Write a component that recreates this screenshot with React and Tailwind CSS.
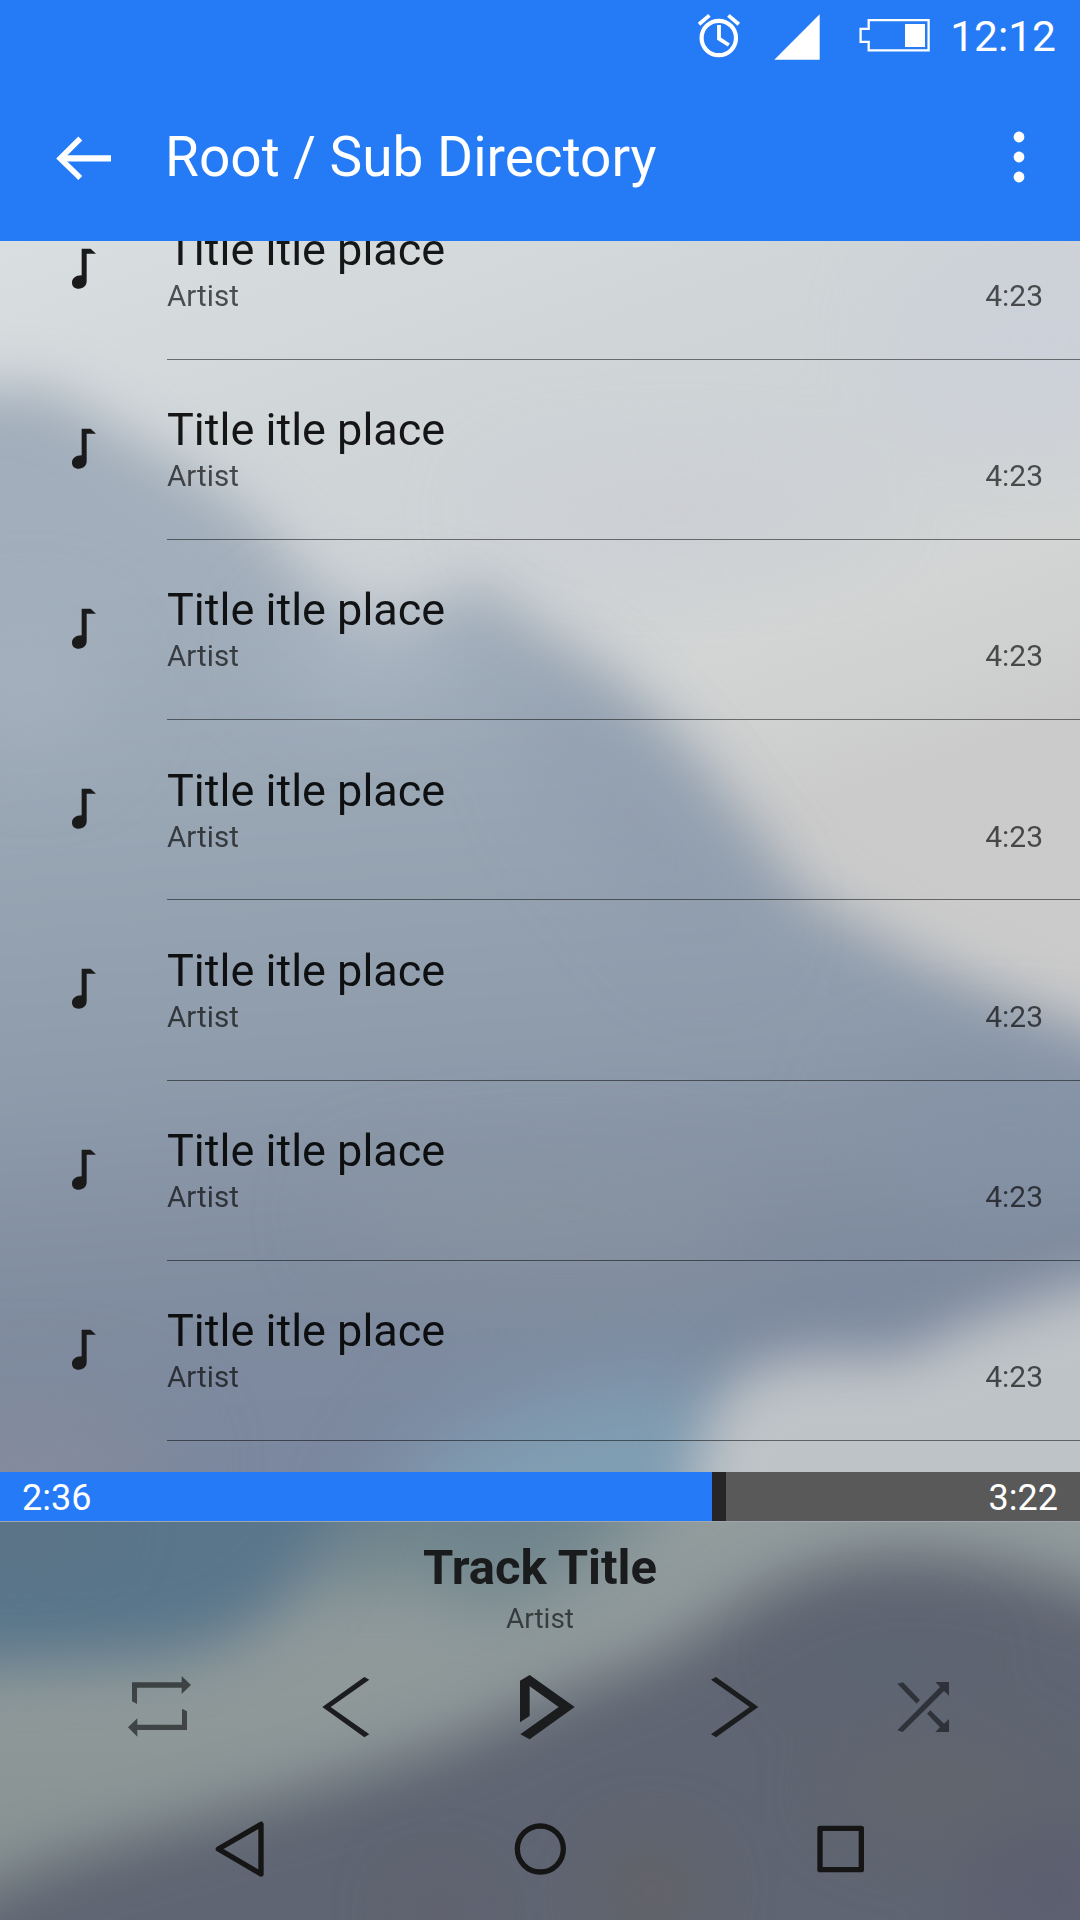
import React from "react";

const TRACKS = Array.from({ length: 7 }, (_, id) => ({
  id,
  title: "Title itle place",
  artist: "Artist",
  length: "4:23",
}));

function StatusBar() {
  return (
    <div className="flex h-[73px] items-start justify-end pr-[24px] text-white">
      <svg className="mt-[13px] h-[46px] w-[44px]" viewBox="697 13 44 46" fill="none" stroke="currentColor">
        <circle cx="718.8" cy="38" r="17.2" strokeWidth="4.2" />
        <path d="M699 24.2 L709.4 15.4 M728.4 15.4 L738.8 24.2" strokeWidth="3.8" />
        <path d="M719 25 V38.6 L728.8 45" strokeWidth="3.8" />
      </svg>
      <svg className="ml-[33px] mt-[14px] h-[46px] w-[46px]" viewBox="774 14 46 46" fill="currentColor">
        <path d="M774.3 59.7 H819.7 V14.3 Z" />
      </svg>
      <svg className="ml-[39px] mt-[18px] h-[34px] w-[71px]" viewBox="859 18 71 34">
        <path d="M868.7 20.1 H928.6 V50.3 H868.7 V41.9 H860.6 V28.9 H868.7 Z" fill="none" stroke="currentColor" strokeWidth="2.3" />
        <rect x="905" y="24" width="20" height="23" fill="currentColor" />
      </svg>
      <span className="ml-[20px] text-[42.5px] leading-[73px]">12:12</span>
    </div>
  );
}

function Toolbar() {
  return (
    <div className="flex h-[168px] items-center text-white">
      <svg className="ml-[55px] mt-[2px] h-[44px] w-[57px]" viewBox="55 136 57 44" fill="none" stroke="currentColor">
        <path d="M80.3 138.6 L60.2 158.4 L80.3 178" strokeWidth="5.6" />
        <path d="M60 158.4 H111" strokeWidth="6.4" />
      </svg>
      <h1 className="ml-[53px] grow text-[55px] leading-[168px]">Root / Sub Directory</h1>
      <svg className="mr-[55px] h-[52px] w-[12px]" viewBox="0 0 12 52" fill="currentColor">
        <circle cx="6" cy="6" r="5.4" />
        <circle cx="6" cy="26" r="5.4" />
        <circle cx="6" cy="46" r="5.4" />
      </svg>
    </div>
  );
}

function MountainBackdrop() {
  return (
    <svg className="absolute inset-0 -z-10 h-full w-full" viewBox="0 241 1080 1231" preserveAspectRatio="none">
      <defs>
        <linearGradient id="sky" x1="0" y1="241" x2="260" y2="1000" gradientUnits="userSpaceOnUse">
          <stop offset="0" stopColor="#d9dee0" />
          <stop offset="0.35" stopColor="#d0d5d8" />
          <stop offset="0.6" stopColor="#cfd3d6" />
          <stop offset="0.78" stopColor="#d3d5d5" />
          <stop offset="1" stopColor="#cbcbcb" />
        </linearGradient>
        <linearGradient id="rock" x1="0" y1="380" x2="80" y2="1472" gradientUnits="userSpaceOnUse">
          <stop offset="0" stopColor="#a1adba" />
          <stop offset="0.2" stopColor="#a2aebb" />
          <stop offset="0.42" stopColor="#98a5b3" />
          <stop offset="0.65" stopColor="#8e9bab" />
          <stop offset="0.85" stopColor="#808c9f" />
          <stop offset="1" stopColor="#7b889f" />
        </linearGradient>
        <filter id="b1" x="-30%" y="-40%" width="160%" height="180%" colorInterpolationFilters="sRGB">
          <feGaussianBlur stdDeviation="27" />
        </filter>
        <filter id="b2" x="-150%" y="-150%" width="400%" height="400%" colorInterpolationFilters="sRGB">
          <feGaussianBlur stdDeviation="45" />
        </filter>
      </defs>
      <rect x="0" y="241" width="1080" height="1231" fill="url(#sky)" />
      <g filter="url(#b2)">
        <ellipse cx="1040" cy="340" rx="140" ry="90" fill="#c9cedb" opacity="0.5" />
        <ellipse cx="680" cy="510" rx="190" ry="35" fill="#c8cad0" opacity="0.6" />
      </g>
      <path
        filter="url(#b1)"
        fill="url(#rock)"
        d="M-120 390 H50 L130 438 L215 488 L267 530 L300 572 L340 610 L390 628 L440 602 L485 584 L533 622 L633 690 L690 748 L745 820 L805 895 L930 965 L1080 1030 L1240 1100 V1700 H-120 Z"
      />
      <g filter="url(#b2)">
        <ellipse cx="370" cy="655" rx="90" ry="35" fill="#b2bdca" opacity="0.75" />
        <ellipse cx="30" cy="690" rx="70" ry="60" fill="#a8b3c0" opacity="0.7" />
        <path d="M520 650 L640 760 L760 920 L700 960 L560 800 Z" fill="#8c9aab" opacity="0.6" />
        <ellipse cx="1010" cy="1130" rx="150" ry="70" fill="#8491a6" opacity="0.7" />
        <ellipse cx="560" cy="1215" rx="220" ry="45" fill="#8a959f" opacity="0.7" />
        <ellipse cx="860" cy="1300" rx="140" ry="35" fill="#7d899f" opacity="0.8" />
        <ellipse cx="30" cy="1470" rx="140" ry="70" fill="#888c9b" opacity="0.7" />
        <path d="M380 1520 L440 1440 L560 1390 L700 1370 L760 1450 L760 1600 H380 Z" fill="#809eb3" />
      </g>
      <path
        filter="url(#b1)"
        fill="#bec3c7"
        d="M1300 1250 L1080 1286 L985 1317 L899 1356 L812 1354 L750 1367 L712 1407 L696 1453 L674 1640 H1300 Z"
      />
    </svg>
  );
}

function NoteIcon() {
  return (
    <svg className="ml-[72px] mt-[68px] h-[41px] w-[24px] shrink-0" viewBox="0 0 72 123" fill="#1a1a1a">
      <path d="M29 82 V2 H56 L72 17 H44 V100 C44 113 34 122 20 122 C8 122 0 115 0 104 C0 92 10 82 29 82 Z" />
    </svg>
  );
}

function TrackRow({ track }) {
  return (
    <li className="flex h-[180.15px]">
      <NoteIcon />
      <div className="ml-[71px] flex grow border-b border-black/50 pt-[44.3px]">
        <div className="grow">
          <div className="text-[45px] leading-[52px] text-black/90">{track.title}</div>
          <div className="text-[29.6px] leading-[40px] text-black/65">{track.artist}</div>
        </div>
        <div className="mr-[37px] mt-[52px] text-[30px] leading-[40px] text-black/65">{track.length}</div>
      </div>
    </li>
  );
}

function SeekBar() {
  return (
    <div className="flex h-[50px] border-b border-[#9fa6ad] bg-[#595959] text-[36px] leading-[52px] text-white">
      <div className="w-[712px] bg-[#257bf7] pl-[22px]">2:36</div>
      <div className="w-[14px] bg-[#262626]" />
      <div className="grow pr-[22px] text-right">3:22</div>
    </div>
  );
}

function PlayerBackdrop() {
  return (
    <svg className="absolute inset-0 -z-10 h-full w-full" viewBox="0 1522 1080 398" preserveAspectRatio="none">
      <defs>
        <linearGradient id="haze" x1="0" y1="1522" x2="0" y2="1920" gradientUnits="userSpaceOnUse">
          <stop offset="0" stopColor="#929c9d" />
          <stop offset="0.5" stopColor="#8e9899" />
          <stop offset="1" stopColor="#859090" />
        </linearGradient>
        <filter id="b3" x="-30%" y="-60%" width="160%" height="220%" colorInterpolationFilters="sRGB">
          <feGaussianBlur stdDeviation="29" />
        </filter>
        <filter id="b4" x="-150%" y="-150%" width="400%" height="400%" colorInterpolationFilters="sRGB">
          <feGaussianBlur stdDeviation="35" />
        </filter>
      </defs>
      <rect x="0" y="1522" width="1080" height="398" fill="url(#haze)" />
      <path filter="url(#b4)" fill="#68808a" opacity="0.85" d="M260 1400 H680 L640 1520 L560 1580 L480 1610 L420 1570 L330 1590 Z" />
      <path filter="url(#b3)" fill="#5a768b" d="M-120 1400 H400 L330 1545 L290 1600 L230 1640 L160 1658 L-120 1670 Z" />
      <path
        filter="url(#b3)"
        fill="#5f6572"
        d="M-120 1945 L14 1880 L69 1858 L172 1828 L310 1790 L448 1745 L551 1698 L654 1660 L710 1625 L775 1585 L840 1562 L910 1554 L1000 1564 L1080 1587 L1240 1640 V2100 H-120 Z"
      />
      <g filter="url(#b4)">
        <ellipse cx="20" cy="1530" rx="90" ry="16" fill="#626f7b" opacity="0.7" />
        <ellipse cx="880" cy="1660" rx="90" ry="30" fill="#5b6573" opacity="0.6" />
        <ellipse cx="940" cy="1790" rx="110" ry="50" fill="#62666a" opacity="0.6" />
        <ellipse cx="650" cy="1890" rx="50" ry="45" fill="#666161" opacity="0.7" />
        <ellipse cx="440" cy="1910" rx="35" ry="25" fill="#665b6a" opacity="0.8" />
        <ellipse cx="1050" cy="1890" rx="80" ry="50" fill="#5a596c" opacity="0.6" />
      </g>
    </svg>
  );
}

function Controls() {
  return (
    <div className="flex h-[131px] items-center pl-[128px] text-[#1b1c1d]">
      <svg className="h-[61px] w-[63px] text-black/55" viewBox="84 108 189 183" fill="currentColor">
        <path d="M96 184 V127 H245 V108 L273 135 L245 162 V143 H111 V192 Z" />
        <path d="M261 214 V270 H112 V290 L84 262 L112 235 V254 H246 V206 Z" />
      </svg>
      <svg className="ml-[131px] h-[62px] w-[48px]" viewBox="666 106 144 186" fill="currentColor">
        <path d="M793 109 L808 117 L692 199 L808 281 L793 290 L667 199 Z" />
      </svg>
      <svg className="ml-[150px] h-[66px] w-[55px]" viewBox="1260 100 165 198" fill="currentColor">
        <path d="M1260 120 L1289 103 L1424 199 L1289 296 L1261 281 L1376 199 L1289 137 V226 L1260 245 Z" />
      </svg>
      <svg className="ml-[136px] h-[62px] w-[48px]" viewBox="633 106 144 186" fill="currentColor">
        <path d="M648 109 L633 117 L749 199 L633 281 L648 290 L775 199 Z" />
      </svg>
      <svg className="ml-[138px] h-[52px] w-[52px] text-black/50" viewBox="1191 120 156 156" fill="currentColor">
        <path d="M1192 128 L1209 124 L1260 177 L1250 188 Z" />
        <path d="M1192 268 L1320 138 L1306 123 H1347 V164 L1332 150 L1208 273 Z" />
        <path d="M1291 208 L1332 248 L1347 234 V273 H1306 L1320 259 L1281 218 Z" />
      </svg>
    </div>
  );
}

function NavBar() {
  return (
    <div className="mt-[5px] flex h-[144px] items-center pl-[215px] text-[#151516]">
      <svg className="h-[56px] w-[49px]" viewBox="345 543 147 168" fill="none" stroke="currentColor" strokeWidth="16" strokeLinejoin="round">
        <path d="M483 553 V702 L355 627 Z" />
      </svg>
      <svg className="ml-[250px] h-[54px] w-[53px]" viewBox="1242 546 159 162" fill="none" stroke="currentColor" strokeWidth="16">
        <circle cx="1321" cy="627" r="69" />
      </svg>
      <svg className="ml-[250px] h-[48px] w-[48px]" viewBox="951 555 144 144" fill="none" stroke="currentColor" strokeWidth="16" strokeLinejoin="round">
        <rect x="960" y="565" width="124" height="124" />
      </svg>
    </div>
  );
}

export default function App() {
  return (
    <div className="flex h-[1920px] w-[1080px] flex-col overflow-hidden font-['Roboto',sans-serif]">
      <header className="h-[241px] shrink-0 bg-[#257bf6]">
        <StatusBar />
        <Toolbar />
      </header>
      <main className="relative isolate h-[1231px] shrink-0 overflow-hidden">
        <MountainBackdrop />
        <ul className="-mt-[61.12px]">
          {TRACKS.map((t) => (
            <TrackRow key={t.id} track={t} />
          ))}
        </ul>
      </main>
      <SeekBar />
      <footer className="relative isolate h-[398px] overflow-hidden pt-[18px]">
        <PlayerBackdrop />
        <div className="text-center text-[49px] font-bold leading-[56px] text-[#191b1c]">Track Title</div>
        <div className="text-center text-[28px] leading-[45px] text-black/60">Artist</div>
        <Controls />
        <NavBar />
      </footer>
    </div>
  );
}
